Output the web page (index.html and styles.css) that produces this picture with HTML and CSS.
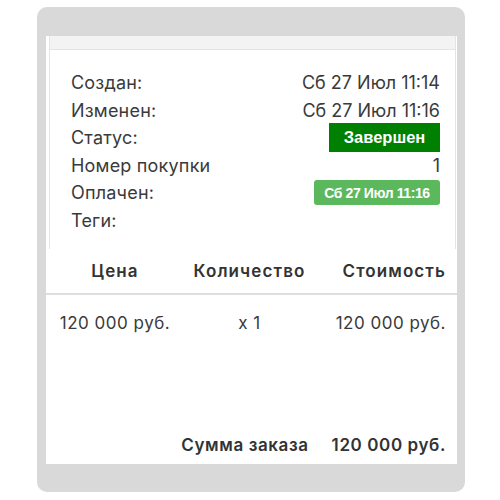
FILE: index.html
```html
<!DOCTYPE html>
<html lang="ru">
<head>
<meta charset="utf-8">
<link rel="stylesheet" href="styles.css">
</head>
<body>
<div class="frame">
  <div class="sheet">
    <div class="info">
      <div class="info-head"></div>
      <div class="info-body">
        <div class="row"><span>Создан:</span><span class="val">Сб 27 Июл 11:14</span></div>
        <div class="row"><span>Изменен:</span><span class="val">Сб 27 Июл 11:16</span></div>
        <div class="row"><span>Статус:</span><span class="badge done">Завершен</span></div>
        <div class="row"><span>Номер покупки</span><span class="val">1</span></div>
        <div class="row"><span>Оплачен:</span><span class="badge paid">Сб 27 Июл 11:16</span></div>
        <div class="row"><span>Теги:</span><span></span></div>
      </div>
    </div>
    <div class="table">
      <div class="thead">
        <div class="c1">Цена</div>
        <div class="c2">Количество</div>
        <div class="c3">Стоимость</div>
      </div>
      <div class="trow">
        <div class="c1">120 000 руб.</div>
        <div class="c2">x 1</div>
        <div class="c3">120 000 руб.</div>
      </div>
      <div class="total">
        <span>Сумма заказа</span>
        <span>120 000 руб.</span>
      </div>
    </div>
  </div>
</div>
</body>
</html>
```
FILE: styles.css
```css
html, body {
  margin: 0;
  padding: 0;
  background: #ffffff;
}
body {
  font-family: Inter, "Noto Sans", sans-serif;
  color: #3a3a3a;
}
.frame {
  margin: 7px 0 0 37px;
  width: 428px;
  height: 485px;
  box-sizing: border-box;
  background: #d9d9d9;
  border-radius: 10px;
  padding: 29px 8px 28px 9px;
}
.sheet {
  background: #ffffff;
  height: 100%;
  display: flex;
  flex-direction: column;
}
.info {
  margin: 0 1px 0 3px;
  border-left: 1px solid #e4e4e4;
  border-right: 1px solid #e4e4e4;
}
.info-head {
  height: 13px;
  background: #f3f3f3;
  border-bottom: 1px solid #e4e4e4;
}
.info-body {
  padding: 19px 15px 15px 21px;
}
.row {
  display: flex;
  justify-content: space-between;
  align-items: center;
  height: 27.5px;
  font-size: 18px;
  letter-spacing: 0.2px;
}
.val {
  letter-spacing: 0;
}
.badge {
  font-family: "Liberation Sans", Arial, sans-serif;
  font-weight: bold;
  color: #ffffff;
  display: flex;
  align-items: center;
  justify-content: center;
}
.done {
  background: #008000;
  font-size: 16.5px;
  letter-spacing: 0;
  width: 111px;
  height: 29px;
}
.paid {
  background: #5cb85c;
  font-size: 14px;
  letter-spacing: -0.4px;
  width: 126px;
  height: 25px;
  border-radius: 3px;
}
.table {
  flex: 1;
  display: flex;
  flex-direction: column;
}
.thead, .trow {
  display: grid;
  grid-template-columns: 138px 131px 1fr;
}
.thead {
  height: 44px;
  align-items: center;
  font-size: 17px;
  font-weight: 600;
  letter-spacing: 1.1px;
  color: #333333;
  border-bottom: 2px solid #dfdfdf;
}
.trow {
  height: 56px;
  align-items: center;
  font-size: 17px;
  letter-spacing: 0.5px;
}
.c1, .c2 {
  text-align: center;
}
.c3 {
  text-align: right;
  padding-right: 11px;
}
.total {
  margin-top: auto;
  height: 38px;
  display: flex;
  justify-content: flex-end;
  align-items: center;
  gap: 23px;
  padding-right: 11px;
  font-size: 17px;
  font-weight: 600;
  letter-spacing: 0.6px;
  color: #333333;
}
```
